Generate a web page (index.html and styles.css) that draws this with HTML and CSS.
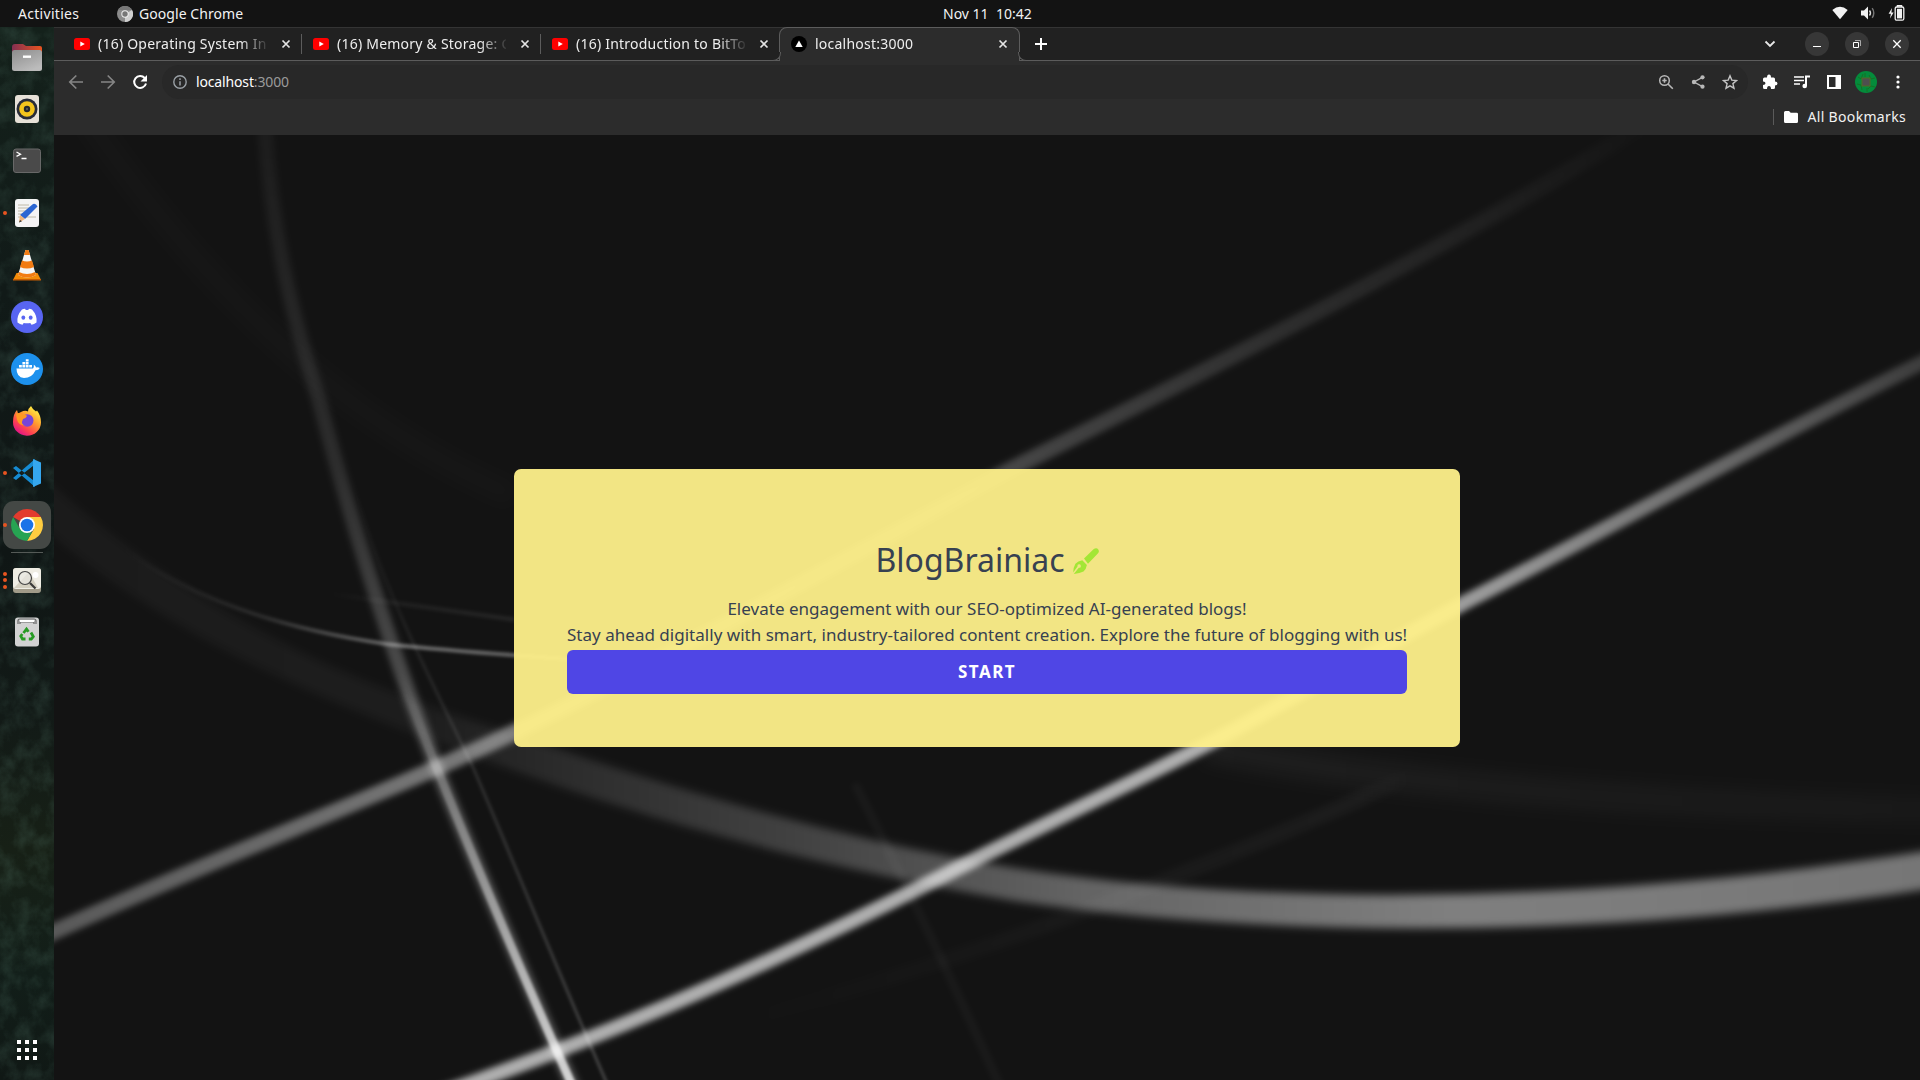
FILE: index.html
```html
<!DOCTYPE html>
<html lang="en">
<head>
<meta charset="utf-8">
<title>localhost:3000</title>
<link rel="stylesheet" href="styles.css">
</head>
<body>
<svg class="defs" width="0" height="0">
  <defs>
    <symbol id="youtube" viewBox="0 0 16 12"><rect width="16" height="12" rx="2.500" fill="#f00"/><path d="M6.300 3.400v5.200L10.800 6z" fill="#fff"/></symbol>
    <symbol id="close" viewBox="0 0 10 10"><path d="M1.500 1.500l7 7M8.500 1.500l-7 7" stroke="#e4e4e4" stroke-width="1.700"/></symbol>
  </defs>
</svg>
<div class="desktop">
  <header class="topbar">
    <div class="topbar-left">
      <span class="activities">Activities</span>
      <svg class="mini-chrome" viewBox="0 0 16 16"><circle cx="8" cy="8" r="8" fill="#8b8b8b"/><path d="M8 8L15 4a8 8 0 0 1-7 12z" fill="#cfcfcf"/><path d="M1 4a8 8 0 0 1 14 0H8z" fill="#777"/><circle cx="8" cy="8" r="3.700" fill="#eee"/><circle cx="8" cy="8" r="2.700" fill="#777"/></svg>
      <span class="app-name">Google Chrome</span>
    </div>
    <div class="clock">Nov 11&nbsp; 10:42</div>
    <div class="topbar-right">
      <svg width="16" height="14" viewBox="0 0 16 14"><path d="M.3 4Q8-2.300 15.700 4L8 13.300z" fill="#f2f2f2"/></svg>
      <svg width="16" height="14" viewBox="0 0 16 14"><path d="M1 4.500h3L8 .6v12.800L4 9.500H1z" fill="#f2f2f2"/><path d="M9.500 4.500q2 2.500 0 5" fill="none" stroke="#ddd" stroke-width="1.400"/><path d="M12.200 2.200q3.200 4.800 0 9.600" fill="none" stroke="#777" stroke-width="1.400"/></svg>
      <svg width="17" height="16" viewBox="0 0 17 16"><path d="M4 3L.6 8.700h2.300L2 13.500 5.600 7.500H3.400z" fill="#f2f2f2"/><path d="M9.500 2V.8h4V2" fill="none" stroke="#f2f2f2" stroke-width="1.500"/><rect x="7.200" y="2" width="8.600" height="13.200" rx="1.500" fill="none" stroke="#f2f2f2" stroke-width="1.300"/><rect x="9" y="3.800" width="5" height="9.600" fill="#f2f2f2"/></svg>
    </div>
  </header>

  <div class="workspace">
    <nav class="dock">
      <svg class="foliage" width="54" height="1053">
        <filter id="leaves" x="0" y="0" width="100%" height="100%"><feTurbulence type="fractalNoise" baseFrequency=".06 .05" numOctaves="5" seed="8"/><feColorMatrix values="0 0 0 0 .14  0 0 0 0 .3  0 0 0 0 .23  1.300 0 0 0 -.5"/></filter>
        <rect width="54" height="1053" filter="url(#leaves)"/>
      </svg>
      <ul class="launchers">
        <li><svg viewBox="0 0 32 32"><defs><linearGradient id="fold"><stop stop-color="#842f52"/><stop offset="1" stop-color="#e95420"/></linearGradient><linearGradient id="grey" x2=".6" y2="1"><stop stop-color="#8c8c8c"/><stop offset="1" stop-color="#bcbcbc"/></linearGradient></defs><path d="M1 6q0-3 3-3h8l3 2h14q2 0 2 2v8H1z" fill="url(#fold)"/><rect x="1" y="9" width="30" height="21" rx="2.500" fill="url(#grey)"/><rect x="12" y="14.500" width="8" height="2.400" fill="#fff"/></svg></li>
        <li><svg viewBox="0 0 32 32"><rect x="4" y="2" width="24" height="28" rx="3" fill="#e7e1d8"/><circle cx="16" cy="16" r="10.500" fill="#292c38"/><circle cx="16" cy="16" r="7.800" fill="#f4c41d"/><circle cx="16" cy="16" r="3.200" fill="#24272c"/><circle cx="16" cy="16" r="1.200" fill="#555"/></svg></li>
        <li><svg viewBox="0 0 32 32"><rect x="2.500" y="4" width="27" height="23.500" rx="2.500" fill="#4a4a4a" stroke="#686868"/><path d="M5.500 7l4 2.200-4 2.200M10.500 13.500h5" fill="none" stroke="#fff" stroke-width="1.300"/></svg></li>
        <li class="running"><svg viewBox="0 0 32 32"><rect x="4" y="2" width="24" height="28" rx="3" fill="#f4f4f4"/><path d="M7 8h11M7 11h13M7 14h10M7 17h8M7 20h18" stroke="#b9b29e" stroke-width=".9"/><path d="M22 7q3-1 4.500 2.500L14 22l-5-4z" fill="#2c66d2"/><path d="M9 18l5 4-6 3.500z" fill="#f0b47b"/><path d="M9 23l2 1.300-3 1.200z" fill="#333"/></svg></li>
        <li><svg viewBox="0 0 32 32"><path d="M5.500 24h21l3.500 7H2z" fill="#f38b09"/><path d="M14.500 1h3L25 26q-9 5-18 0z" fill="#f5f5f5"/><path d="M14.500 1h3l1.500 5h-6zM11 11.500q5 2 10 0l2 6.500q-7 3-14 0zM8 23q8 4 16 0l1 3q-9 5-18 0z" fill="#f27b12"/><path d="M2 30h28v1.500H2z" fill="#c85c00"/></svg></li>
        <li><svg viewBox="0 0 32 32"><circle cx="16" cy="16" r="16" fill="#5865f2"/><path d="M11 8.500q1.500-.7 3-.8l.8 1.300h2.400l.8-1.300q1.500.1 3 .8 5.500 6 4.500 13-2.500 1.800-5 2.300l-1.200-1.900q-3.300.8-6.600 0l-1.200 1.900q-2.500-.5-5-2.300Q5.500 14.500 11 8.500z" fill="#fff"/><ellipse cx="12.300" cy="16.600" rx="1.900" ry="2.200" fill="#5865f2"/><ellipse cx="19.700" cy="16.600" rx="1.900" ry="2.200" fill="#5865f2"/></svg></li>
        <li><svg viewBox="0 0 32 32"><circle cx="16" cy="16" r="16" fill="#1d91ed"/><path d="M5.500 15.500H22q1.200-.6.800-3.800 2 1 2.200 2.800 2-.5 3.800.4-1 2.400-4.300 2.300Q21 25 13 25q-7.500-.5-7.500-9.500zM8 12h2.800v2.600H8zM11.400 12h2.800v2.600h-2.800zM14.800 12h2.800v2.600h-2.800zM18.200 12H21v2.600h-2.800zM11.400 9h2.800v2.500h-2.800zM14.800 9h2.800v2.500h-2.800zM14.800 6.300h2.800v2.300h-2.800z" fill="#fff"/></svg></li>
        <li><svg viewBox="0 0 32 32"><defs><linearGradient id="fox" x1=".85" y1=".1" x2=".25" y2=".95"><stop stop-color="#fff044"/><stop offset=".4" stop-color="#ff9a2e"/><stop offset=".75" stop-color="#ff4151"/><stop offset="1" stop-color="#e31587"/></linearGradient></defs><path d="M20 1q2 4 5 5.500l1-1q4 5 4 12A14 13.500 0 0 1 2 17Q2 9 6 5l1 3.500 3-1.500q4-2 7-.5 0-3 3-5.500z" fill="url(#fox)"/><circle cx="16.300" cy="15.500" r="6.200" fill="#7845d8"/><path d="M5 9q4-2 6 .5 4 0 5 1.500-1 2.500-4 3-3 6 3 6.500-8 0-9-6z" fill="#ff9a22"/></svg></li>
        <li class="running"><svg viewBox="0 0 32 32"><path d="M2 11l3-2 19 15v6zM2 21l3 2L24 8V2z" fill="#168bd2"/><path d="M22 2l8 3.500v21L22 30z" fill="#35a7ee"/><path d="M22 9v14l-9-7z" fill="#17231e"/></svg></li>
        <li class="running focused"><svg viewBox="0 0 32 32"><path d="M16 16L2.150 8A16 16 0 0 1 29.850 8z" fill="#e33b2e"/><path d="M16 8h13.850A16 16 0 0 1 16 32L23 20z" fill="#ffcd40"/><path d="M2.150 8L9 20l7 4 5-1-5 9A16 16 0 0 1 2.150 8z" fill="#26a352"/><circle cx="16" cy="16" r="8" fill="#fff"/><circle cx="16" cy="16" r="6.300" fill="#1a73e8"/></svg></li>
        <li class="divided running multi"><svg viewBox="0 0 32 32"><rect x="2" y="4" width="28" height="25" rx="3" fill="#a19b89"/><rect x="2" y="4" width="28" height="21" rx="3" fill="#efede4"/><path d="M3 24L18 8l9 16z" fill="#d4d0c1"/><circle cx="24.500" cy="11" r="3" fill="#fff"/><circle cx="14" cy="14" r="6.500" fill="#e9e8e3" fill-opacity=".7" stroke="#444" stroke-width="1.200"/><path d="M19 19l5.500 5.500" stroke="#3a3a3a" stroke-width="2.200"/></svg></li>
        <li><svg viewBox="0 0 32 32"><rect x="4" y="1.500" width="24" height="29" rx="3" fill="#d2d2d2"/><path d="M7 8V5q0-2 2-2h14q2 0 2 2v3M9 8V6h14v2" fill="none" stroke="#666" stroke-width="1.200"/><path d="M9 4h14v2H9z" fill="#fff"/><g fill="none" stroke="#279b24" stroke-width="2.800"><path d="M12.500 17l3-4 2 2.800M20 16.500l2.300 4-2 2.500h-2.500M14.500 23h-3l-1.700-3 1.500-2"/></g></svg></li>
      </ul>
      <svg class="app-grid" viewBox="0 0 20 20"><path d="M0 0h4v4H0zM8 0h4v4H8zM16 0h4v4h-4zM0 8h4v4H0zM8 8h4v4H8zM16 8h4v4h-4zM0 16h4v4H0zM8 16h4v4H8zM16 16h4v4h-4z" fill="#fff"/></svg>
    </nav>

    <section class="browser">
      <div class="tabstrip">
        <div class="tab"><svg class="favicon"><use href="#youtube"/></svg><span class="tab-title">(16) Operating System In</span><svg class="tab-close"><use href="#close"/></svg></div>
        <div class="tab"><svg class="favicon"><use href="#youtube"/></svg><span class="tab-title">(16) Memory &amp; Storage: C</span><svg class="tab-close"><use href="#close"/></svg></div>
        <div class="tab last"><svg class="favicon"><use href="#youtube"/></svg><span class="tab-title">(16) Introduction to BitTo</span><svg class="tab-close"><use href="#close"/></svg></div>
        <div class="tab active"><svg class="favicon round" viewBox="0 0 16 16"><circle cx="8" cy="8" r="8" fill="#000"/><path d="M8 4.500l3.700 6.500H4.300z" fill="#fff"/></svg><span class="tab-title">localhost:3000</span><svg class="tab-close"><use href="#close"/></svg></div>
        <svg class="new-tab" viewBox="0 0 12 12"><path d="M6 0v12M0 6h12" stroke="#fff" stroke-width="2"/></svg>
        <div class="window-controls">
          <svg class="chevron" viewBox="0 0 12 8"><path d="M1.500 1.500L6 6l4.500-4.500" fill="none" stroke="#e8e8e8" stroke-width="1.800"/></svg>
          <svg class="win" viewBox="0 0 24 24"><circle cx="12" cy="12" r="12" fill="#373737"/><path d="M8 14.500h8" stroke="#fff"/></svg>
          <svg class="win" viewBox="0 0 24 24"><circle cx="12" cy="12" r="12" fill="#373737"/><path d="M8.500 10.500h5v5h-5z" fill="none" stroke="#fff"/><path d="M10 8.500h5.500V14" fill="none" stroke="#aaa"/></svg>
          <svg class="win" viewBox="0 0 24 24"><circle cx="12" cy="12" r="12" fill="#373737"/><path d="M8.300 8.300l7.400 7.400M15.700 8.300l-7.400 7.400" stroke="#fff" stroke-width="1.300"/></svg>
        </div>
      </div>

      <div class="toolbar">
        <svg class="nav-icon" viewBox="0 0 16 16"><path d="M15 8H2M8.300 1.500L1.800 8l6.500 6.500" fill="none" stroke="#858585" stroke-width="1.700"/></svg>
        <svg class="nav-icon" viewBox="0 0 16 16"><path d="M1 8h13M7.700 1.500L14.200 8l-6.500 6.500" fill="none" stroke="#858585" stroke-width="1.700"/></svg>
        <svg class="nav-icon" viewBox="0 0 16 16"><path d="M14 9.500A6 6 0 1 1 12.700 4" fill="none" stroke="#fff" stroke-width="2"/><path d="M15 1v6.500H8.500z" fill="#fff"/></svg>
        <div class="omnibox">
          <svg class="info" viewBox="0 0 14 14"><circle cx="7" cy="7" r="6.200" fill="none" stroke="#9aa0a6" stroke-width="1.400"/><path d="M7 6.200v4.300M7 3.300v1.600" stroke="#9aa0a6" stroke-width="1.500"/></svg>
          <span class="url">localhost<span class="port">:3000</span></span>
          <div class="omni-actions">
            <svg viewBox="0 0 16 16"><circle cx="6.500" cy="6.500" r="4.800" fill="none" stroke="#b8b8b8" stroke-width="1.500"/><path d="M10 10l4.800 4.800M4.300 6.500h4.400M6.500 4.300v4.400" stroke="#b8b8b8" stroke-width="1.600"/></svg>
            <svg viewBox="0 0 16 16"><path d="M12.500 3.300L4 8l8.500 4.700" fill="none" stroke="#b8b8b8" stroke-width="1.400"/><g fill="#b8b8b8"><circle cx="12.500" cy="3.300" r="2.100"/><circle cx="4" cy="8" r="2.200"/><circle cx="12.500" cy="12.700" r="2.100"/></g></svg>
            <svg viewBox="0 0 16 16"><path d="M8 1.800l1.800 4.300 4.700.4-3.600 3.100 1.100 4.600L8 11.800l-4 2.400 1.100-4.600-3.600-3.100 4.700-.4z" fill="none" stroke="#c4c4c4" stroke-width="1.400"/></svg>
          </div>
        </div>
        <div class="extensions">
          <svg viewBox="0 0 16 16"><path d="M1 5q0-1.500 1.500-1.500H5Q5 .5 7 .5t2 3h2.500Q13 3.500 13 5v2.500q2.500 0 2.500 2t-2.500 2v2q0 1.500-1.500 1.500H9q0-3-2-3t-2 3H2.500Q1 15 1 13.500V11q2.500 0 2.500-1.800T1 7.500z" fill="#fff"/></svg>
          <svg viewBox="0 0 16 16"><path d="M0 3h10M0 6.500h10M0 10h6" stroke="#fff" stroke-width="1.600"/><path d="M12 12V2.500h4" fill="none" stroke="#fff" stroke-width="2"/><circle cx="10.700" cy="12" r="2.300" fill="#fff"/></svg>
          <svg viewBox="0 0 16 16"><path d="M1 1h14v14H1zM3 3v10h6.500V3z" fill="#fff" fill-rule="evenodd"/></svg>
          <svg class="avatar" viewBox="0 0 22 22"><circle cx="11" cy="11" r="11" fill="#048b3b"/><path d="M3 6l3 2 2-5m6 1l2 4 4-1M2 13l4 1 1 5m6-1l3-3 4 1M10 2v4m2 11v4" fill="none" stroke="#167026"/><rect x="7" y="7" width="8" height="8" fill="#4f4f4f" stroke="#536b24"/></svg>
          <svg viewBox="0 0 16 16"><g fill="#fff"><circle cx="8" cy="3" r="1.600"/><circle cx="8" cy="8" r="1.600"/><circle cx="8" cy="13" r="1.600"/></g></svg>
        </div>
      </div>

      <div class="bookmarks">
        <span class="bm-divider"></span>
        <svg class="bm-folder" viewBox="0 0 14 12"><path d="M0 1.500Q0 0 1.500 0H5l1.700 1.700h6Q14 1.700 14 3v7.500q0 1.500-1.500 1.500h-11Q0 12 0 10.500z" fill="#fff"/></svg>
        <span class="bm-label">All Bookmarks</span>
      </div>

      <main class="page">
        <svg class="beams" viewBox="44.1 110.25 1523.9 771.75" preserveAspectRatio="none">
          <defs>
            <filter id="b1" filterUnits="userSpaceOnUse" x="0" y="60" width="1640" height="880"><feGaussianBlur stdDeviation="1.100"/></filter>
            <filter id="b3" filterUnits="userSpaceOnUse" x="0" y="60" width="1640" height="880"><feGaussianBlur stdDeviation="2.500"/></filter>
            <filter id="b5" filterUnits="userSpaceOnUse" x="0" y="60" width="1640" height="880"><feGaussianBlur stdDeviation="3.500"/></filter>
            <filter id="b8" filterUnits="userSpaceOnUse" x="0" y="60" width="1640" height="880"><feGaussianBlur stdDeviation="7"/></filter>
            <linearGradient id="gA" gradientUnits="userSpaceOnUse" x1="0" y1="110" x2="0" y2="882"><stop stop-color="#fff" stop-opacity=".04"/><stop offset=".35" stop-color="#fff" stop-opacity=".11"/><stop offset=".6" stop-color="#fff" stop-opacity=".25"/><stop offset="1" stop-color="#fff" stop-opacity=".26"/></linearGradient>
            <linearGradient id="gA2" gradientUnits="userSpaceOnUse" x1="0" y1="550" x2="0" y2="882"><stop stop-color="#fff" stop-opacity="0"/><stop offset=".3" stop-color="#fff" stop-opacity=".25"/><stop offset="1" stop-color="#fff" stop-opacity=".75"/></linearGradient>
            <linearGradient id="gB" gradientUnits="userSpaceOnUse" x1="44" y1="762" x2="1330" y2="110"><stop stop-color="#fff" stop-opacity=".3"/><stop offset=".27" stop-color="#fff" stop-opacity=".44"/><stop offset=".6" stop-color="#fff" stop-opacity=".22"/><stop offset=".78" stop-color="#fff" stop-opacity=".11"/><stop offset="1" stop-color="#fff" stop-opacity=".01"/></linearGradient>
            <linearGradient id="gC" gradientUnits="userSpaceOnUse" x1="370" y1="882" x2="1568" y2="297"><stop stop-color="#fff" stop-opacity=".66"/><stop offset=".6" stop-color="#fff" stop-opacity=".66"/><stop offset=".72" stop-color="#fff" stop-opacity=".55"/><stop offset="1" stop-color="#fff" stop-opacity=".18"/></linearGradient>
            <linearGradient id="gD" gradientUnits="userSpaceOnUse" x1="44" y1="0" x2="1568" y2="0"><stop stop-color="#fff" stop-opacity=".035"/><stop offset=".2" stop-color="#fff" stop-opacity=".045"/><stop offset=".28" stop-color="#fff" stop-opacity=".11"/><stop offset=".4" stop-color="#fff" stop-opacity=".2"/><stop offset=".55" stop-color="#fff" stop-opacity=".34"/><stop offset=".75" stop-color="#fff" stop-opacity=".46"/><stop offset="1" stop-color="#fff" stop-opacity=".42"/></linearGradient>
            <linearGradient id="gE" gradientUnits="userSpaceOnUse" x1="100" y1="0" x2="560" y2="0"><stop stop-color="#fff" stop-opacity="0"/><stop offset=".25" stop-color="#fff" stop-opacity=".1"/><stop offset=".5" stop-color="#fff" stop-opacity=".35"/><stop offset="1" stop-color="#fff" stop-opacity=".25"/></linearGradient>
            <linearGradient id="gF" gradientUnits="userSpaceOnUse" x1="0" y1="400" x2="0" y2="882"><stop stop-color="#fff" stop-opacity="0"/><stop offset=".3" stop-color="#fff" stop-opacity=".07"/><stop offset="1" stop-color="#fff" stop-opacity=".18"/></linearGradient>
            <linearGradient id="gG" gradientUnits="userSpaceOnUse" x1="600" y1="0" x2="1150" y2="0"><stop stop-color="#fff" stop-opacity="0"/><stop offset=".5" stop-color="#fff" stop-opacity=".025"/><stop offset=".93" stop-color="#fff" stop-opacity=".04"/><stop offset="1" stop-color="#fff" stop-opacity="0"/></linearGradient>
            <linearGradient id="gI" gradientUnits="userSpaceOnUse" x1="985" y1="0" x2="1568" y2="0"><stop stop-color="#fff" stop-opacity=".05"/><stop offset="1" stop-color="#fff" stop-opacity=".025"/></linearGradient>
            <linearGradient id="gT" gradientUnits="userSpaceOnUse" x1="270" y1="0" x2="420" y2="0"><stop stop-color="#fff" stop-opacity="0"/><stop offset=".4" stop-color="#fff" stop-opacity=".05"/><stop offset="1" stop-color="#fff" stop-opacity=".07"/></linearGradient>
          </defs>
          <g fill="none" stroke="#fff">
            <path d="M60 80Q220 320 420 405" stroke-width="22" opacity=".01" filter="url(#b8)"/>
            <path d="M985 610Q1200 655 1600 662" stroke="url(#gI)" stroke-width="22" filter="url(#b8)"/>
            <path d="M600 835Q850 770 1150 635" stroke="url(#gG)" stroke-width="12" filter="url(#b3)"/>
            <path d="M698 640Q750 740 818 890" stroke-width="6" opacity=".035" filter="url(#b3)"/>
            <path d="M285 380C310 480 350 550 386 626C420 705 450 780 497 888" stroke="url(#gF)" stroke-width="2.800" filter="url(#b1)"/>
            <path d="M270 485Q340 495 420 506" stroke="url(#gT)" stroke-width="4" filter="url(#b1)"/>
            <path d="M90 440Q170 505 316 526Q400 535 560 544" stroke="url(#gE)" stroke-width="3.500" filter="url(#b1)"/>
            <path d="M216 100C222 200 244 275 260 325C285 420 315 520 357 628C390 710 425 790 469 890" stroke="url(#gA)" stroke-width="12" filter="url(#b3)"/>
            <path d="M325 545C345 600 395 725 468 888" stroke="url(#gA2)" stroke-width="7" filter="url(#b1)"/>
            <path d="M35 765C200 690 300 655 420 598C560 530 720 440 830 381C990 300 1180 205 1340 103" stroke="url(#gB)" stroke-width="13" filter="url(#b3)"/>
            <path d="M350 897C470 855 600 803 790 705C890 655 960 622 1010 595C1090 550 1160 512 1200 490C1320 428 1440 360 1580 291" stroke="url(#gC)" stroke-width="12" filter="url(#b3)"/>
          </g>
          <path d="M35 390C180 520 310 565 430 603C590 658 720 692 830 709C1040 742 1310 738 1580 694L1580 725C1320 767 1040 767 830 736C700 713 570 683 430 633C290 583 150 530 35 430z" fill="url(#gD)" filter="url(#b5)"/>
        </svg>
        <div class="card">
          <h1 class="brand"><span>BlogBrainiac</span><svg class="pen" viewBox="0 0 26 26"><path d="M11 10.500L20.500 1.200q3-2 4.800.3 1.500 2.200-.7 4.300L15 15.800z" fill="#a3e635"/><path d="M9.300 12.200l4.600 4.800q-.6 4-3.400 6.500Q7 25.500.8 25.900l5-6.200a1.700 1.700 0 1 0-1.300-1.300L.2 24.600Q0 20 2.400 15.700 5 12.700 9.300 12.200z" fill="#a3e635"/></svg></h1>
          <p class="line">Elevate engagement with our SEO-optimized AI-generated blogs!</p>
          <p class="line">Stay ahead digitally with smart, industry-tailored content creation. Explore the future of blogging with us!</p>
          <button class="start" type="button">START</button>
        </div>
      </main>
    </section>
  </div>
</div>
</body>
</html>
```

FILE: styles.css
```css
* { box-sizing: border-box; }
body { margin: 0; background: #131313; font-family: "Noto Sans", sans-serif; color: #f2f2f2; }
svg { display: block; flex: none; }
.defs { position: absolute; }
.desktop { width: 1920px; height: 1080px; display: flex; flex-direction: column; overflow: hidden; white-space: nowrap; }

.topbar { height: 27px; flex: none; display: grid; grid-template-columns: 925px auto 1fr; align-items: center; background: #131313; font-size: 14px; line-height: 26px; padding: 0 15px 0 18px; }
.topbar-left { display: flex; align-items: center; }
.activities { width: 99px; letter-spacing: .3px; }
.mini-chrome { width: 16px; height: 16px; margin-right: 6px; }
.app-name { letter-spacing: .06px; }
.topbar-right { display: flex; justify-content: flex-end; align-items: center; gap: 12px; padding-bottom: 1px; }

.workspace { display: flex; flex: 1; min-height: 0; }
.dock { width: 54px; flex: none; display: flex; flex-direction: column; align-items: center; justify-content: space-between; position: relative; background: linear-gradient(#14211b, #111a18 25%, #0f1615 50%, #121a17 65%, #172016 78%, #121e19 90%, #101815); padding: 6px 0 20px; }
.foliage { position: absolute; left: 0; top: 0; opacity: .3; }
.launchers { list-style: none; margin: 0; padding: 0; display: flex; flex-direction: column; gap: 4px; position: relative; }
.launchers li { width: 48px; height: 48px; border-radius: 11px; display: flex; align-items: center; justify-content: center; position: relative; }
.launchers svg { width: 32px; height: 32px; }
.launchers .focused { background: #444845; }
.running::before { content: ""; position: absolute; left: 0; top: 22px; width: 4px; height: 4px; border-radius: 50%; background: #e95420; }
.multi::before { box-shadow: 0 -6px #e95420, 0 7px #e95420; }
.launchers .divided { margin-top: 3px; }
.divided::after { content: ""; position: absolute; left: 8px; top: -4px; width: 32px; height: 1px; background: #555a57; }
.app-grid { width: 20px; height: 20px; position: relative; }

.browser { flex: 1; min-width: 0; display: flex; flex-direction: column; }
.tabstrip { height: 34px; flex: none; display: flex; align-items: center; background: #212121; border-top: 1px solid #343434; box-shadow: inset 0 -1px #5c5c5c; padding-left: 9px; font-size: 14px; }
.tab { width: 239px; height: 33px; display: flex; align-items: center; padding: 0 11px 1px; position: relative; }
.tab.last { width: 238px; }
.tab:not(.last):not(.active)::after { content: ""; position: absolute; right: 0; top: 6px; width: 1px; height: 20px; background: #5c5c5c; }
.favicon { width: 16px; height: 12px; margin-right: 8px; }
.favicon.round { height: 16px; }
.tab-title { width: 169px; letter-spacing: .23px; line-height: 20px; padding-bottom: 1px; color: #eee; mask-image: linear-gradient(90deg, #000 142px, transparent 172px); }
.tab-close { width: 10px; height: 10px; margin-left: 14px; }
.tab.active { width: 241px; height: 34px; margin-top: -1px; padding-left: 11px; background: #2c2c2c; border: 1px solid #5c5c5c; border-bottom: 0; border-radius: 8px 8px 0 0; }
.tab.active::before, .tab.active::after { content: ""; position: absolute; bottom: 0; width: 8px; height: 8px; border-bottom: 1px solid #5c5c5c; background: #212121; }
.tab.active::before { left: -8px; border-right: 1px solid #5c5c5c; border-bottom-right-radius: 8px; }
.tab.active::after { right: -8px; border-left: 1px solid #5c5c5c; border-bottom-left-radius: 8px; }
.new-tab { width: 12px; height: 12px; margin: 0 0 1px 15px; }
.window-controls { margin-left: auto; display: flex; align-items: center; gap: 16px; padding: 0 11px 1px 0; }
.chevron { width: 12px; height: 8px; margin-right: 13px; }
.win { width: 24px; height: 24px; }

.toolbar { height: 42px; flex: none; display: flex; align-items: center; background: #2c2c2c; padding: 0 14px; }
.nav-icon { width: 16px; height: 16px; margin-right: 16px; }
.omnibox { flex: 1; height: 34px; border-radius: 17px; background: #282828; display: flex; align-items: center; padding: 0 10px 0 11px; margin-left: -2px; }
.info { width: 14px; height: 14px; margin-right: 9px; }
.url { font-size: 14px; color: #fff; letter-spacing: -.15px; padding-bottom: 1px; }
.port { color: #9a9a9a; }
.omni-actions { margin-left: auto; display: flex; gap: 16px; }
.omni-actions svg { width: 16px; height: 16px; }
.extensions { display: flex; align-items: center; gap: 16px; padding-left: 14px; }
.extensions svg { width: 16px; height: 16px; }
.extensions .avatar { width: 22px; height: 22px; margin: 0 -3px; }

.bookmarks { height: 32px; flex: none; display: flex; align-items: center; justify-content: flex-end; background: #2c2c2c; padding: 0 14px 4px 0; font-size: 14px; }
.bm-divider { width: 1px; height: 16px; background: #5a5a5a; margin-right: 10px; }
.bm-folder { width: 14px; height: 12px; margin-right: 9px; }
.bm-label { letter-spacing: .33px; padding-bottom: 2px; }

.page { flex: 1; min-height: 0; display: grid; place-items: center; position: relative; background: #131313; overflow: hidden; }
.beams { position: absolute; inset: 0; width: 100%; height: 100%; }
.card { position: relative; width: 946px; height: 278px; margin-top: 1px; padding: 69px 53px 53px; border-radius: 7px; background: rgba(254, 240, 138, .95); color: #374151; text-align: center; display: flex; flex-direction: column; }
.brand { margin: 0 0 15px; height: 43px; display: flex; justify-content: center; align-items: center; font-size: 32px; font-weight: 400; line-height: 43px; }
.pen { width: 26px; height: 26px; margin: 2px 0 0 8px; }
.line { margin: 0; font-size: 17px; line-height: 26.4px; height: 26.4px; letter-spacing: .02px; }
.start { height: 44px; margin-top: 1.2px; border: 0; border-radius: 6px; background: #4f46e5; color: #fff; font: 700 17px/44px "Noto Sans", sans-serif; padding: 0; letter-spacing: 1.5px; }
```
